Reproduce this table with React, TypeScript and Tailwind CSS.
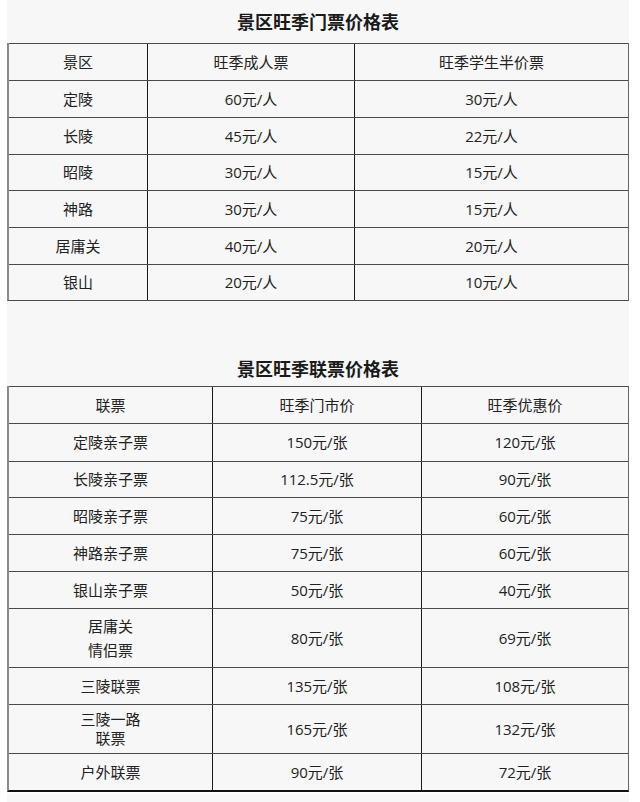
import React from "react";

const font = { fontFamily: '"Open Sans", "Noto Sans CJK SC", "Noto Sans", sans-serif' };
const titleFont = { fontFamily: '"Noto Sans CJK SC", "Noto Sans", sans-serif' };

type Row = { h: string; cells: React.ReactNode[] };

const t1: Row[] = [
  { h: "h-[37px]", cells: ["景区", "旺季成人票", "旺季学生半价票"] },
  { h: "h-[37px]", cells: ["定陵", "60元/人", "30元/人"] },
  { h: "h-[37px]", cells: ["长陵", "45元/人", "22元/人"] },
  { h: "h-[36px]", cells: ["昭陵", "30元/人", "15元/人"] },
  { h: "h-[37px]", cells: ["神路", "30元/人", "15元/人"] },
  { h: "h-[37px]", cells: ["居庸关", "40元/人", "20元/人"] },
  { h: "h-[36px]", cells: ["银山", "20元/人", "10元/人"] },
];

const t2: Row[] = [
  { h: "h-[37px]", cells: ["联票", "旺季门市价", "旺季优惠价"] },
  { h: "h-[38px]", cells: ["定陵亲子票", "150元/张", "120元/张"] },
  { h: "h-[36px]", cells: ["长陵亲子票", "112.5元/张", "90元/张"] },
  { h: "h-[37px]", cells: ["昭陵亲子票", "75元/张", "60元/张"] },
  { h: "h-[37px]", cells: ["神路亲子票", "75元/张", "60元/张"] },
  { h: "h-[37px]", cells: ["银山亲子票", "50元/张", "40元/张"] },
  {
    h: "h-[59px]",
    cells: [
      <div className="flex flex-col items-center leading-[24px]">
        <span>居庸关</span>
        <span>情侣票</span>
      </div>,
      "80元/张",
      "69元/张",
    ],
  },
  { h: "h-[37px]", cells: ["三陵联票", "135元/张", "108元/张"] },
  {
    h: "h-[49px]",
    cells: [
      <div className="flex flex-col items-center leading-[19px]">
        <span>三陵一路</span>
        <span>联票</span>
      </div>,
      "165元/张",
      "132元/张",
    ],
  },
  { h: "h-[37px]", cells: ["户外联票", "90元/张", "72元/张"] },
];

function Table({ rows, cols, last }: { rows: Row[]; cols: string; last: string }) {
  return (
    <div className={`border-l-2 border-l-[#8a8a8a] border-r border-r-[#666] ${last}`}>
      {rows.map((r, i) => (
        <div key={i} className={`grid ${cols} ${r.h} border-t border-t-[#4a4a4a]`}>
          {r.cells.map((c, j) => (
            <div
              key={j}
              className={`flex items-center justify-center text-[15px] text-[#222] ${
                j < 2 ? "border-r border-r-[#1a1a1a]" : ""
              }`}
            >
              {c}
            </div>
          ))}
        </div>
      ))}
    </div>
  );
}

export default function App() {
  return (
    <div className="w-[640px] h-[802px] overflow-hidden bg-white" style={font}>
      <div className="ml-[7px] w-[622px] bg-[#f7f7f7]">
        <div
          className="h-[43px] flex items-center justify-center text-[18px] font-bold text-[#1a1a1a]"
          style={titleFont}
        >
          景区旺季门票价格表
        </div>
        <Table rows={t1} cols="grid-cols-[139px_207px_1fr]" last="border-b border-b-[#4a4a4a]" />
        <div className="h-[50px]" />
        <div
          className="h-[35px] flex items-center justify-center text-[18px] font-bold text-[#1a1a1a]"
          style={titleFont}
        >
          景区旺季联票价格表
        </div>
        <Table rows={t2} cols="grid-cols-[204px_209px_1fr]" last="border-b-2 border-b-[#111]" />
      </div>
      <div className="h-[2px]" />
      <div className="ml-[7px] w-[622px] h-[20px] bg-[#f7f7f7]" />
    </div>
  );
}
